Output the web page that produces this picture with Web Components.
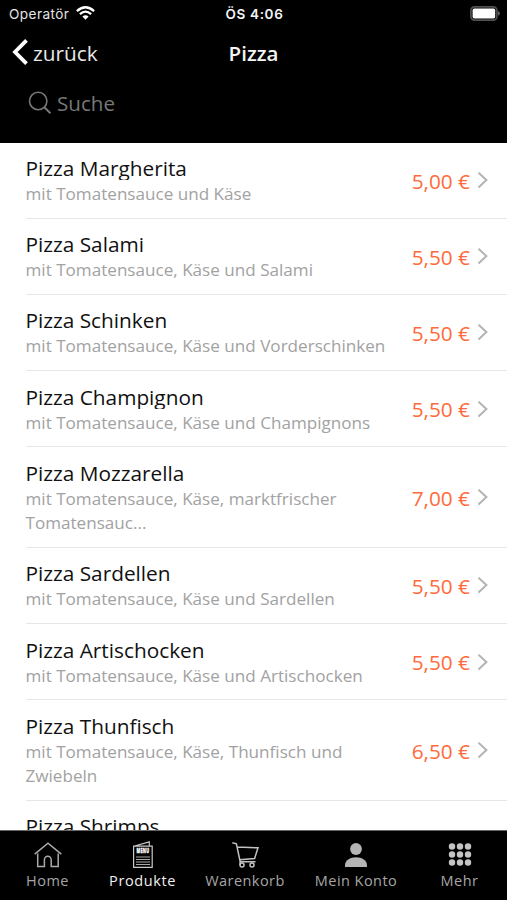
<!DOCTYPE html>
<html lang="de">
<head>
<meta charset="utf-8">
<title>Pizza</title>
<style>
html, body { margin: 0; height: 100%; background: #fff; }
body { font-family: "Open Sans", "Noto Sans", sans-serif; overflow: hidden; }
</style>
</head>
<body>
<menu-app></menu-app>
<script>
const define = (name, html, setup) => {
  const template = document.createElement('template');
  template.innerHTML = html;
  customElements.define(name, class extends HTMLElement {
    constructor() {
      super();
      this.attachShadow({ mode: 'open' }).append(template.content.cloneNode(true));
    }
    connectedCallback() { if (setup) setup(this, this.shadowRoot); }
  });
};

define('status-bar', `
<style>
:host { display: grid; grid-template-columns: 1fr auto 1fr; align-items: center; height: 28px; padding: 0 7px 0 9px; box-sizing: border-box; font: 13px/28px Inter, sans-serif; color: #e4e4e4; }
.left { display: flex; align-items: center; gap: 6px; font-size: 13.6px; letter-spacing: .42px; }
.left span { width: 61px; white-space: nowrap; }
.time { font-weight: 600; font-size: 13.5px; letter-spacing: .65px; color: #f4f4f4; }
.battery { justify-self: end; margin-top: -2px; }
svg { display: block; }
.wifi { margin-top: -2px; }
</style>
<div class="left"><span>Operatör</span>
<svg class="wifi" width="19" height="14" viewBox="0 0 19 14" fill="none" stroke="#fff" stroke-width="2.3"><path d="M.9 5.1Q9.5-2.6 18.1 5.1M3.9 8.2Q9.5 3 15.1 8.2"/><path d="M9.5 13.8 6.4 10.6Q9.5 8 12.6 10.6Z" fill="#fff" stroke="none"/></svg></div>
<span class="time">ÖS 4:06</span>
<svg class="battery" width="30" height="15" viewBox="0 0 30 15"><rect x=".9" y=".9" width="26" height="13.2" rx="3.6" fill="none" stroke="#505050" stroke-width="1.7"/><rect x="2.6" y="2.6" width="22.6" height="9.8" rx="1.6" fill="#fff"/><path d="M28 5Q30 6 30 7.4T28 9.8Z" fill="#606060"/></svg>`);

define('nav-header', `
<style>
:host { display: grid; grid-template-columns: 1fr auto 1fr; align-items: center; height: 50px; padding: 0 11px; box-sizing: border-box; color: #f5f5f5; font-size: 20.5px; }
.back { display: flex; align-items: center; gap: 5px; font-size: 20.8px; color: #e8e8e8; }
.title { font-weight: 600; }
svg { display: block; margin-top: -2px; }
</style>
<div class="back"><svg width="17" height="26" viewBox="0 0 17 26" fill="none" stroke="#fff" stroke-width="3.8"><path d="M15.5 1.3 4 13 15.5 24.7"/></svg><slot name="back"></slot></div>
<div class="title"><slot></slot></div>`);

define('search-field', `
<style>
:host { display: flex; align-items: center; gap: 6px; height: 64px; padding: 0 28px 14px; box-sizing: border-box; color: #777; font-size: 20.6px; }
svg { display: block; }
</style>
<svg width="23" height="24" viewBox="0 0 23 24" fill="none" stroke="#777" stroke-width="1.6"><circle cx="10.2" cy="10" r="8.7"/><path d="m16.4 16.2 6 6.2" stroke-width="2"/></svg><slot></slot>`);

define('menu-item', `
<style>
:host { display: flex; align-items: center; margin-left: 25.5px; padding: 0 18px 0 0; border-bottom: 1px solid #e6e6e6; box-sizing: border-box; }
.text { flex: 1; min-width: 0; padding: 13.6px 0 11.3px; }
.name { height: 24px; line-height: 24px; margin-bottom: 1.9px; overflow: hidden; font-size: 20.8px; color: #111; white-space: nowrap; }
.info { width: 368px; font-size: 17.1px; line-height: 24.4px; color: #a2a2a2; }
.price { font-size: 20.8px; color: #ff6a3c; white-space: nowrap; padding-top: 1.4px; }
svg { display: block; margin-left: 7px; }
</style>
<div class="text"><div class="name"><slot name="name"></slot></div><div class="info"><slot></slot></div></div>
<div class="price"><slot name="price"></slot></div>
<svg width="12" height="18" viewBox="0 0 12 18" fill="none" stroke="#b4b4b4" stroke-width="2"><path d="m1.5 1.8 7.9 7.3-7.9 7.3"/></svg>`);

const icons = {
  home: '<svg width="30" height="28" viewBox="0 0 30 28" fill="none" stroke="#aaa" stroke-width="1.5"><path d="M1.7 13.2 15 2.2 28.3 13.2"/><path d="M4.7 12.5V25.4H11.4V18.8A3.4 3.6 0 0 1 18.2 18.8V25.4H25.2V12.5"/></svg>',
  menu: '<svg width="22" height="28" viewBox="0 0 22 28"><path d="M1.6 5.2H20.2V26.4H1.6ZM2.6 5 17.3.9V5" fill="none" stroke="#c9c9c9" stroke-width="1.2"/><text x="11" y="12.2" font-family="Open Sans, sans-serif" font-size="6.2" font-weight="800" fill="#fff" stroke="#fff" stroke-width=".3" text-anchor="middle" textLength="13" lengthAdjust="spacingAndGlyphs">MENU</text><path d="M4 16H18M4 18.5H18M4 21H18M4 23.5H18" stroke="#aaa" stroke-width="1.1"/></svg>',
  cart: '<svg width="30" height="28" viewBox="0 0 30 28" fill="none" stroke="#c2c2c2" stroke-width="1.5"><path d="M2.3 1.8 6.4 2.8 10.1 20.4V24M7.2 6 28 6.8 24.6 17.6 9.8 18.8M10.1 20.8H25.5"/><circle cx="12" cy="24" r="2"/><circle cx="22" cy="24" r="2"/></svg>',
  user: '<svg width="24" height="28" viewBox="0 0 24 28" fill="#b5b5b5"><circle cx="12" cy="8" r="5.9"/><path d="M1 26V24.2C1 19.2 6 16.2 12 16.2S23 19.2 23 24.2V26Z"/></svg>',
  more: '<svg width="24" height="28" viewBox="0 0 24 28" fill="#c4c4c4">' + [5.5, 13.5, 21.5].map(y => [4, 12, 20].map(x => `<circle cx="${x}" cy="${y}" r="3.2"/>`).join('')).join('') + '</svg>'
};

define('tab-item', `
<style>
:host { display: flex; flex-direction: column; align-items: center; padding-top: 10px; font-size: 14.5px; line-height: 20px; letter-spacing: .45px; color: #a6a6a6; white-space: nowrap; }
:host([active]) { color: #f0f0f0; letter-spacing: .6px; }
.icon { height: 28px; margin-bottom: 2.4px; }
svg { display: block; }
</style>
<div class="icon"></div><slot></slot>`, (el, root) => { root.querySelector('.icon').innerHTML = icons[el.getAttribute('icon')]; });

define('tab-bar', `
<style>
:host { display: grid; grid-template-columns: 95px 95px 110px 112px 95px; height: 70px; box-sizing: border-box; background: #000; border-top: 1px solid #666; }
</style><slot></slot>`);

const dishes = [
  ['Pizza Margherita', 'mit Tomatensauce und Käse', '5,00 €'],
  ['Pizza Salami', 'mit Tomatensauce, Käse und Salami', '5,50 €'],
  ['Pizza Schinken', 'mit Tomatensauce, Käse und Vorderschinken', '5,50 €'],
  ['Pizza Champignon', 'mit Tomatensauce, Käse und Champignons', '5,50 €'],
  ['Pizza Mozzarella', 'mit Tomatensauce, Käse, marktfrischer<br>Tomatensauc...', '7,00 €'],
  ['Pizza Sardellen', 'mit Tomatensauce, Käse und Sardellen', '5,50 €'],
  ['Pizza Artischocken', 'mit Tomatensauce, Käse und Artischocken', '5,50 €'],
  ['Pizza Thunfisch', 'mit Tomatensauce, Käse, Thunfisch und<br>Zwiebeln', '6,50 €'],
  ['Pizza Shrimps', '', '']
];

define('menu-list', `
<style>
:host { display: block; overflow: hidden; background: #fff; }
.next { margin-left: 25.5px; padding-top: 13.2px; font-size: 20.8px; line-height: 24px; color: #111; }
</style>
${dishes.slice(0, 8).map(([n, d, p]) => `<menu-item><span slot="name">${n}</span>${d}<span slot="price">${p}</span></menu-item>`).join('')}
<div class="next">${dishes[8][0]}</div>`);

define('menu-app', `
<style>
:host { display: grid; grid-template-rows: 142.5px minmax(0, 1fr) 70px; width: 507px; height: 900px; }
header { background: #000; }
</style>
<header><status-bar></status-bar><nav-header><span slot="back">zurück</span>Pizza</nav-header><search-field>Suche</search-field></header>
<menu-list></menu-list>
<tab-bar><tab-item icon="home">Home</tab-item><tab-item icon="menu" active>Produkte</tab-item><tab-item icon="cart">Warenkorb</tab-item><tab-item icon="user">Mein Konto</tab-item><tab-item icon="more">Mehr</tab-item></tab-bar>`);
</script>
</body>
</html>
